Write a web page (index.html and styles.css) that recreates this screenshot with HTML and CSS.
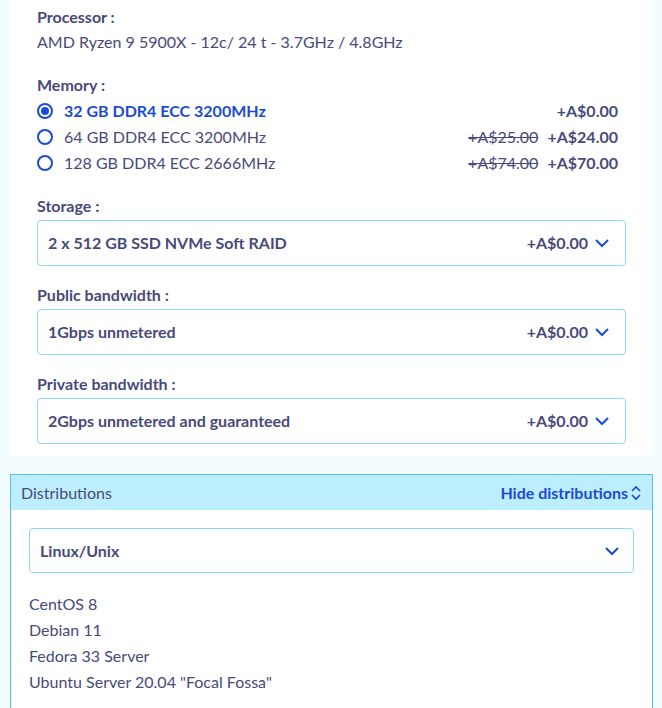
FILE: index.html
```html
<!DOCTYPE html>
<html lang="en">
<head>
    <meta charset="UTF-8">
    <meta name="viewport" content="width=device-width, initial-scale=1.0">
    <title>Server configuration</title>
    <link rel="stylesheet" href="styles.css">
</head>
<body>
    <div class="config">
        <div class="field">
            <div class="field-label">Processor :</div>
            <div class="field-value">AMD Ryzen 9 5900X - 12c/ 24 t - 3.7GHz / 4.8GHz</div>
        </div>

        <div class="field">
            <div class="field-label">Memory :</div>
            <label class="option selected">
                <span class="radio"></span>
                <span class="option-name">32 GB DDR4 ECC 3200MHz</span>
                <span class="price">+A$0.00</span>
            </label>
            <label class="option">
                <span class="radio"></span>
                <span class="option-name">64 GB DDR4 ECC 3200MHz</span>
                <span class="old-price">+A$25.00</span>
                <span class="price">+A$24.00</span>
            </label>
            <label class="option">
                <span class="radio"></span>
                <span class="option-name">128 GB DDR4 ECC 2666MHz</span>
                <span class="old-price">+A$74.00</span>
                <span class="price">+A$70.00</span>
            </label>
        </div>

        <div class="field">
            <div class="field-label">Storage :</div>
            <div class="select">
                <span class="select-text">2 x 512 GB SSD NVMe Soft RAID</span>
                <span class="price">+A$0.00</span>
                <svg class="chevron" viewBox="0 0 16 16"><path d="M2 5l6 6 6-6"/></svg>
            </div>
        </div>

        <div class="field">
            <div class="field-label">Public bandwidth :</div>
            <div class="select">
                <span class="select-text">1Gbps unmetered</span>
                <span class="price">+A$0.00</span>
                <svg class="chevron" viewBox="0 0 16 16"><path d="M2 5l6 6 6-6"/></svg>
            </div>
        </div>

        <div class="field">
            <div class="field-label">Private bandwidth :</div>
            <div class="select">
                <span class="select-text">2Gbps unmetered and guaranteed</span>
                <span class="price">+A$0.00</span>
                <svg class="chevron" viewBox="0 0 16 16"><path d="M2 5l6 6 6-6"/></svg>
            </div>
        </div>
    </div>

    <div class="panel">
        <div class="panel-head">
            <span class="panel-title">Distributions</span>
            <a class="toggle" href="#">Hide distributions<svg class="updown" viewBox="0 0 12 18"><path d="M2 7l4-4 4 4M2 11l4 4 4-4"/></svg></a>
        </div>
        <div class="panel-body">
            <div class="select">
                <span class="select-text">Linux/Unix</span>
                <svg class="chevron" viewBox="0 0 16 16"><path d="M2 5l6 6 6-6"/></svg>
            </div>
            <ul class="distros">
                <li>CentOS 8</li>
                <li>Debian 11</li>
                <li>Fedora 33 Server</li>
                <li>Ubuntu Server 20.04 "Focal Fossa"</li>
            </ul>
        </div>
    </div>
</body>
</html>
```

FILE: styles.css
```css
body {
    font-family: 'Lato', 'Liberation Sans', sans-serif;
    font-size: 16px;
    line-height: 26px;
    color: #474a7a;
    background-color: #f3fcff;
    margin: 0;
    padding: 0;
}
.config {
    background-color: #fff;
    margin: 0 9px 0 10px;
    padding: 4px 27px 12px 27px;
}
.field {
    margin-bottom: 17px;
}
.field:nth-child(n+3) {
    margin-bottom: 16px;
}
.field:last-child {
    margin-bottom: 0;
}
.field-label {
    font-weight: bold;
    margin-bottom: 0;
}
.field-value {
    margin-top: -1px;
}
.option {
    display: flex;
    align-items: center;
    gap: 9px;
}
.radio {
    width: 16px;
    height: 16px;
    border: 2px solid #1a4bd8;
    border-radius: 50%;
    box-sizing: border-box;
    margin-right: 2px;
    position: relative;
}
.selected .radio::after {
    content: '';
    position: absolute;
    left: 2px;
    top: 2px;
    width: 8px;
    height: 8px;
    border-radius: 50%;
    background-color: #1a4bd8;
}
.option-name {
    flex-grow: 1;
}
.selected .option-name {
    color: #1a4bd8;
    font-weight: bold;
}
.price {
    font-weight: bold;
    margin-right: 8px;
}
.old-price {
    text-decoration: line-through;
}
.select {
    display: flex;
    align-items: center;
    height: 46px;
    box-sizing: border-box;
    border: 1px solid #8fd7f7;
    border-radius: 4px;
    padding: 0 15px 0 10px;
    margin-top: 1px;
    font-weight: bold;
}
.select-text {
    flex-grow: 1;
}
.select .price {
    margin-right: 6px;
}
.chevron {
    width: 16px;
    height: 16px;
    fill: none;
    stroke: #1a4bd8;
    stroke-width: 2;
}
.panel {
    margin: 18px 9px 0 10px;
    border: 1px solid #5ab9ee;
    border-bottom: none;
    background-color: #fff;
    min-height: 240px;
}
.panel-head {
    display: flex;
    justify-content: space-between;
    align-items: center;
    height: 35px;
    padding: 0 10px;
    background-color: #bdeefd;
}
.toggle {
    display: flex;
    align-items: center;
    color: #1a4bd8;
    font-weight: bold;
    text-decoration: none;
}
.updown {
    width: 12px;
    height: 18px;
    margin-left: 2px;
    fill: none;
    stroke: #1a4bd8;
    stroke-width: 1.6;
}
.panel-body {
    padding: 18px 18px;
}
.panel-body .select {
    height: 45px;
    margin-top: 0;
    padding-right: 13px;
}
.distros {
    list-style: none;
    margin: 18px 0 0 0;
    padding: 0;
}
```
